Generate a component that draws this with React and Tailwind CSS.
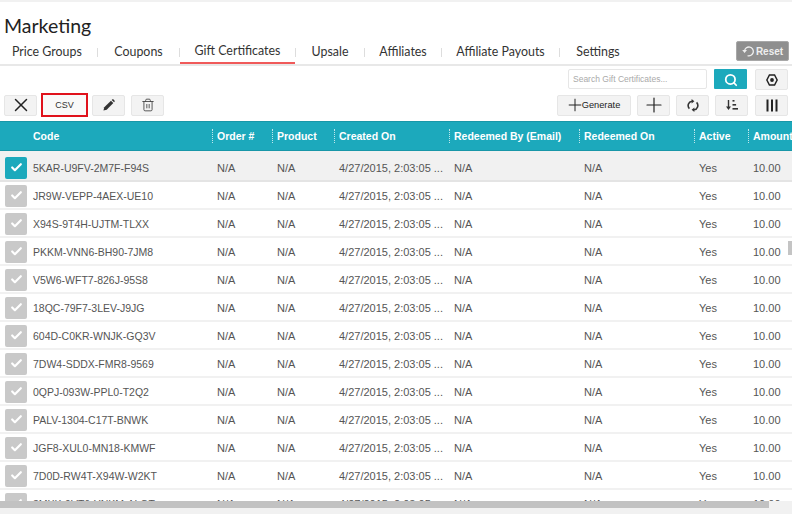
import { Check, Search, Plus, X, Trash2 } from 'lucide-react';

const tabs = [
  { label: 'Price Groups', width: 'w-[97px] pl-[12px] justify-start' },
  { label: 'Coupons', width: 'w-[81px] justify-center' },
  { label: 'Gift Certificates', width: 'w-[115px] justify-center border-b-[2px] border-[#f05a5a]' },
  { label: 'Upsale', width: 'w-[68px] justify-center' },
  { label: 'Affiliates', width: 'w-[76px] justify-center' },
  { label: 'Affiliate Payouts', width: 'w-[117px] justify-center' },
  { label: 'Settings', width: 'w-[76px] justify-center' },
];
const headers = ['Code', 'Order #', 'Product', 'Created On', 'Redeemed By (Email)', 'Redeemed On', 'Active', 'Amount'];
const codes = [
  '5KAR-U9FV-2M7F-F94S',
  'JR9W-VEPP-4AEX-UE10',
  'X94S-9T4H-UJTM-TLXX',
  'PKKM-VNN6-BH90-7JM8',
  'V5W6-WFT7-826J-95S8',
  '18QC-79F7-3LEV-J9JG',
  '604D-C0KR-WNJK-GQ3V',
  '7DW4-SDDX-FMR8-9569',
  '0QPJ-093W-PPL0-T2Q2',
  'PALV-1304-C17T-BNWK',
  'JGF8-XUL0-MN18-KMWF',
  '7D0D-RW4T-X94W-W2KT',
  '3MXK-9VT6-YNKM-ALQT',
];

const cols = 'grid grid-cols-[33px_184px_60px_62px_115px_130px_115px_54px_80px]';
const btn = 'flex items-center justify-center h-[21px] bg-[#f3f3f3] border border-[#e6e6e6] rounded-[2px] text-[#222]';

function Pencil() {
  return (
    <svg width="12" height="12" viewBox="0 0 13 13" fill="#333">
      <path d="M0.5 12.5 L1.4 9 L8.6 1.8 L11.2 4.4 L4 11.6 Z" />
      <path d="M9.4 1 L10.2 0.3 Q10.7 0 11.2 0.4 L12.6 1.8 Q13 2.3 12.6 2.8 L12 3.6 Z" />
    </svg>
  );
}

function Refresh() {
  return (
    <svg width="12" height="13" viewBox="0 0 12 13" fill="none" stroke="#333" strokeWidth="1.6">
      <path d="M5 2.2 A4.4 4.4 0 0 0 2.4 9.6" />
      <path d="M7 10.8 A4.4 4.4 0 0 0 9.6 3.4" />
      <path d="M4.6 0 L7.4 2.2 L4.6 4.4 Z" fill="#333" stroke="none" />
      <path d="M7.4 8.6 L4.6 10.8 L7.4 13 Z" fill="#333" stroke="none" />
    </svg>
  );
}

function ResetIcon() {
  return (
    <svg width="13" height="12" viewBox="0 0 13 12" fill="none" stroke="#eee" strokeWidth="1.3">
      <path d="M2.6 5.8 A4.4 4.4 0 1 1 5.6 10.6" />
      <path d="M0.2 5 L5 5 L2.6 8 Z" fill="#eee" stroke="none" />
    </svg>
  );
}

function Target() {
  return (
    <svg width="12" height="12" viewBox="0 0 14 14">
      <path d="M4 1.2 H10 L13 7 L10 12.8 H4 L1 7 Z" fill="none" stroke="#222" strokeWidth="1.7" />
      <circle cx="7" cy="7" r="2.2" fill="#222" />
    </svg>
  );
}

function SortIcon() {
  return (
    <svg width="12" height="12" viewBox="0 0 12 12" fill="#333">
      <rect x="1.8" y="1" width="1.4" height="8" />
      <path d="M0 7.4 H5 L2.5 11 Z" />
      <rect x="6.5" y="1" width="2" height="1.6" />
      <rect x="6.5" y="5" width="3.6" height="1.6" />
      <rect x="6.5" y="9" width="5.5" height="1.6" />
    </svg>
  );
}

function Columns() {
  return (
    <svg width="12" height="13" viewBox="0 0 12 13" fill="#222">
      <rect x="0.5" y="0.5" width="2" height="12" />
      <rect x="5" y="0.5" width="2" height="12" />
      <rect x="9.5" y="0.5" width="2" height="12" />
    </svg>
  );
}

function Row({ code, index }) {
  const selected = index === 0;
  return (
    <div className={`${cols} h-[28px] pt-[2px] items-center border-b-[2px] shrink-0 text-[11px] text-[#555] ${selected ? 'bg-[#f1f1f1] border-[#e4e4e4]' : 'bg-white border-[#f1f1f1]'}`}>
      <div className={`ml-[5px] -mt-[1px] w-[22px] h-[22px] flex items-center justify-center rounded-[2px] ${selected ? 'bg-[#1ca9bc]' : 'bg-[#c9c9c9]'}`}>
        <Check size={13} strokeWidth={4} className="text-white" />
      </div>
      <div className="text-[10.5px] pt-px">{code}</div>
      <div>N/A</div>
      <div>N/A</div>
      <div className="whitespace-nowrap">4/27/2015, 2:03:05 ...</div>
      <div>N/A</div>
      <div>N/A</div>
      <div>Yes</div>
      <div>10.00</div>
    </div>
  );
}

export default function App() {
  return (
    <div className="relative w-[792px] h-[514px] overflow-hidden bg-white flex flex-col font-['Liberation_Sans',sans-serif]">
      <div className="h-[2px] bg-[#f1f1f1] shrink-0" />

      {/* Title */}
      <h1 className="h-[38px] pt-[13px] pl-[4px] text-[19.5px] leading-[22px] text-[#222] font-['Lato',sans-serif] shrink-0">Marketing</h1>

      {/* Tabs */}
      <div className="relative flex h-[26px] border-b-[2px] border-[#e8e8e8] shrink-0 font-['Lato',sans-serif] text-[12.4px] text-[#333]">
        {tabs.map((t, i) => (
          <div key={t.label} className="flex items-center h-[24px]">
            <span className={`flex items-center h-[24px] whitespace-nowrap ${t.width}`}>{t.label}</span>
            {i < tabs.length - 1 && <span className="w-px h-[9px] bg-[#ddd]" />}
          </div>
        ))}
        <button className="absolute right-[3px] top-[1px] w-[53px] h-[20px] bg-[#8f8f8f] border border-[#a8a8a8] rounded-[2px] flex items-center justify-center gap-[1px] text-[#eee] text-[10px] font-bold font-['Liberation_Sans',sans-serif]">
          <ResetIcon />Reset
        </button>
      </div>

      {/* Search row */}
      <div className="flex justify-end items-center gap-[8px] h-[22px] mt-[2px] pr-[4px] shrink-0">
        <div className="w-[139px] h-[20px] -mr-px border border-[#e6e6e6] rounded-[2px] flex items-center pl-[4px] text-[8.5px] text-[#aaa]">Search Gift Certificates...</div>
        <div className="w-[33px] h-[20px] bg-[#1ca9bc] rounded-[1px] flex items-center justify-center pt-[2px]">
          <Search size={14} strokeWidth={3} className="text-white" />
        </div>
        <div className={`${btn} w-[33px] pt-[2px]`}><Target /></div>
      </div>

      {/* Actions row */}
      <div className="flex justify-between items-center h-[22px] mt-[4px] pl-[4px] pr-[4px] shrink-0">
        <div className="flex items-center gap-[4px]">
          <div className={`${btn} w-[33px]`}><X size={22} strokeWidth={1.6} /></div>
          <div className="flex items-center justify-center w-[47px] h-[24px] pt-px border-2 border-[#e0121c] bg-[#f9f9f9] text-[9px] text-[#333]">CSV</div>
          <div className={`${btn} w-[33px]`}><Pencil /></div>
          <div className={`${btn} w-[33px] ml-[2px]`}><Trash2 size={14} strokeWidth={1.5} className="text-[#444]" /></div>
        </div>
        <div className="flex items-center gap-[6px]">
          <div className={`${btn} w-[74px] text-[9.25px]`}><Plus size={20} strokeWidth={1.2} className="-mx-[3px]" /><span className="pt-px">Generate</span></div>
          <div className={`${btn} w-[33px]`}><Plus size={24} strokeWidth={1.2} /></div>
          <div className={`${btn} w-[33px]`}><Refresh /></div>
          <div className={`${btn} w-[33px]`}><SortIcon /></div>
          <div className={`${btn} w-[33px] ml-[1px]`}><Columns /></div>
        </div>
      </div>

      {/* Table header */}
      <div className={`${cols} h-[30px] mt-[5px] items-center bg-[#1ca9bc] border-t border-b border-[#1897a8] text-white text-[10.5px] font-bold shrink-0`}>
        <div />
        {headers.map((h, i) => (
          <div key={h} className={`whitespace-nowrap h-[14px] leading-[14px] ${i === 0 ? '' : '-ml-[5px] pl-[4px] border-l border-dotted border-[#bfe6ec]'}`}>{h}</div>
        ))}
      </div>
      <div className="h-[3px] bg-[#f1f1f1] shrink-0" />

      {/* Rows */}
      <div className="flex flex-col">
        {codes.map((c, i) => <Row key={c} code={c} index={i} />)}
      </div>

      {/* Scrollbars */}
      <div className="absolute right-0 top-[241px] w-[4px] h-[14px] bg-[#c4c4c4]" />
      <div className="absolute left-0 right-0 bottom-0 h-[13px] bg-[#f1f1f1]">
        <div className="h-[7px] w-[769px] bg-[#c2c2c2]" />
      </div>
    </div>
  );
}
